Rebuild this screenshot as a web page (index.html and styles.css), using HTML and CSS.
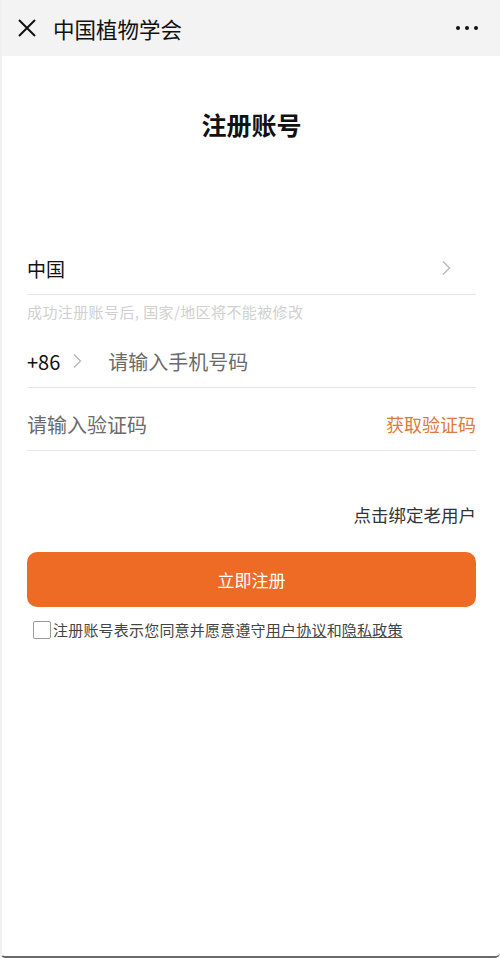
FILE: index.html
```html
<!DOCTYPE html>
<html lang="zh-CN">

<head>
    <meta charset="UTF-8">
    <meta name="viewport" content="width=device-width, initial-scale=1.0">
    <title>注册账号</title>
    <link rel="stylesheet" href="styles.css">
</head>

<body>
    <div class="page">
        <div class="topbar">
            <svg class="close" width="20" height="20" viewBox="0 0 20 20">
                <path d="M2 2 L18 18 M18 2 L2 18" stroke="#111" stroke-width="2" fill="none" />
            </svg>
            <span class="topbar-title">中国植物学会</span>
            <span class="more"><i></i><i></i><i></i></span>
        </div>

        <div class="main">
            <h1 class="title">注册账号</h1>

            <div class="row country">
                <span class="value">中国</span>
                <svg class="arrow" width="10" height="16" viewBox="0 0 10 16">
                    <polyline points="2,1.5 8.5,8 2,14.5" stroke="#b8b8b8" stroke-width="1.4" fill="none" />
                </svg>
            </div>
            <p class="hint">成功注册账号后, 国家/地区将不能被修改</p>

            <div class="row phone">
                <span class="value">+86</span>
                <svg class="arrow small" width="10" height="16" viewBox="0 0 10 16">
                    <polyline points="2,1.5 8.5,8 2,14.5" stroke="#b8b8b8" stroke-width="1.4" fill="none" />
                </svg>
                <span class="placeholder">请输入手机号码</span>
            </div>

            <div class="row code">
                <span class="placeholder">请输入验证码</span>
                <span class="getcode">获取验证码</span>
            </div>

            <div class="bind">点击绑定老用户</div>

            <div class="btn">立即注册</div>

            <div class="agree">
                <span class="check"></span>
                <span>注册账号表示您同意并愿意遵守<u>用户协议</u>和<u>隐私政策</u></span>
            </div>
        </div>
    </div>
</body>

</html>
```

FILE: styles.css
```css
* {
    margin: 0;
    padding: 0;
}

body {
    font-family: "Noto Sans CJK SC", "Noto Sans", sans-serif;
    background-color: #fff;
    color: #111;
}

.page {
    height: 958px;
    box-sizing: border-box;
    border-left: 2px solid #f0f0f0;
    border-bottom: 2px solid #6a6a6a;
    border-radius: 0 0 5px 5px;
    overflow: hidden;
}

.topbar {
    height: 56px;
    background-color: #f3f3f3;
    display: flex;
    align-items: center;
    padding: 0 22px 0 15px;
}

.topbar .close {
    margin-right: 16px;
}

.topbar-title {
    font-size: 21.5px;
    flex: 1;
    color: #111;
}

.more {
    display: flex;
    gap: 5px;
}

.more i {
    width: 4px;
    height: 4px;
    border-radius: 50%;
    background-color: #111;
}

.main {
    padding: 0 24px 0 25px;
}

.title {
    margin-top: 52px;
    text-align: center;
    font-size: 25px;
    line-height: 32px;
    font-weight: bold;
    color: #111;
}

.row {
    height: 52px;
    display: flex;
    align-items: center;
    border-bottom: 1.5px solid #e6e6e6;
}

.country {
    margin-top: 102px;
    justify-content: space-between;
    padding-right: 25px;
}

.value {
    font-size: 19px;
    color: #111;
}

.phone .value {
    font-size: 20px;
}

.arrow.small {
    margin-left: 12px;
    margin-right: 26px;
}

.hint {
    margin-top: 7px;
    font-size: 15px;
    letter-spacing: 0.4px;
    line-height: 20px;
    color: #d0d0d0;
}

.phone {
    margin-top: 13px;
}

.placeholder {
    font-size: 20px;
    color: #6b6b6b;
}

.code {
    margin-top: 10px;
    justify-content: space-between;
}

.getcode {
    font-size: 18px;
    color: #e0793a;
}

.bind {
    margin-top: 52px;
    text-align: right;
    font-size: 17.5px;
    line-height: 24px;
    color: #333;
}

.btn {
    margin-top: 25px;
    height: 55px;
    border-radius: 10px;
    background-color: #ed6b24;
    color: #fff;
    font-size: 17px;
    display: flex;
    align-items: center;
    justify-content: center;
}

.agree {
    margin-top: 13px;
    display: flex;
    align-items: center;
    font-size: 15px;
    letter-spacing: 0.2px;
    line-height: 20px;
    color: #444;
    padding-left: 6px;
}

.agree u {
    text-decoration-color: #555;
}

.check {
    width: 16px;
    height: 16px;
    border: 1.5px solid #999;
    border-radius: 2px;
    margin-right: 2px;
}
```
